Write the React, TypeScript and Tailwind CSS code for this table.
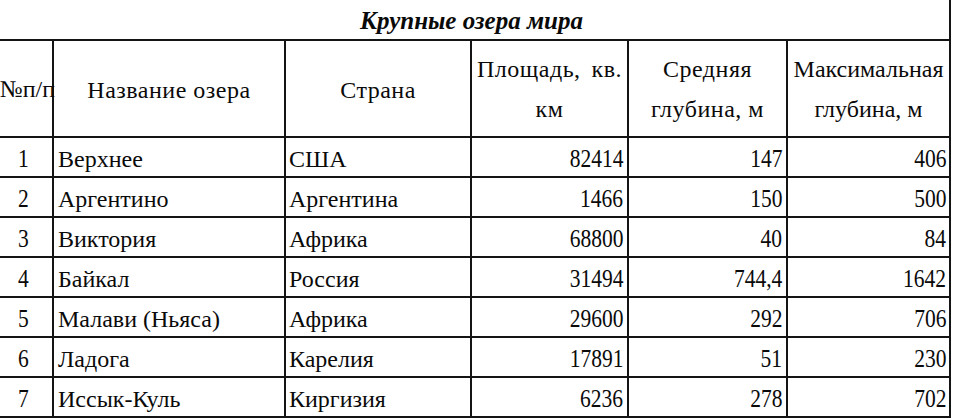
import React from "react";

const rows: [string, string, string, string, string, string][] = [
  ["1", "Верхнее", "США", "82414", "147", "406"],
  ["2", "Аргентино", "Аргентина", "1466", "150", "500"],
  ["3", "Виктория", "Африка", "68800", "40", "84"],
  ["4", "Байкал", "Россия", "31494", "744,4", "1642"],
  ["5", "Малави (Ньяса)", "Африка", "29600", "292", "706"],
  ["6", "Ладога", "Карелия", "17891", "51", "230"],
  ["7", "Иссык-Куль", "Киргизия", "6236", "278", "702"],
];

const grid = "grid grid-cols-[62px_232px_186px_157px_159px_163px]";
const cell = "border-r-2 border-b-2 border-[#141414] overflow-visible";

function Num({ v, center }: { v: string; center?: boolean }) {
  return (
    <span
      className={`inline-block text-[25px] leading-none scale-x-[0.86] ${center ? "origin-center" : "origin-right"}`}
    >
      {v}
    </span>
  );
}

export default function App() {
  return (
    <div
      className="w-[954px] h-[418px] overflow-hidden bg-white text-[#0a0a0a]"
      style={{ fontFamily: '"Liberation Serif", "Times New Roman", serif' }}
    >
      <div className="ml-[-8px] w-[959px]">
        <div className="h-[41px] border-r-2 border-b-2 border-[#141414] flex items-center justify-center pt-[1px]">
          <span className="text-[25px] font-bold italic leading-none pl-[2px]">Крупные озера мира</span>
        </div>
        <div className={`${grid} h-[97px] text-[24px] tracking-[0.5px]`}>
          <div className={`${cell} border-l-2 flex items-center justify-end leading-none`}>
            <span className="whitespace-nowrap mr-[-3px] tracking-normal">№п/п</span>
          </div>
          <div className={`${cell} flex items-center justify-center leading-none pt-[3px]`}>
            Название озера
          </div>
          <div className={`${cell} flex items-center justify-center leading-none pt-[3px]`}>
            Страна
          </div>
          <div className={`${cell} flex items-center px-[5px] leading-[40px]`}>
            <div className="w-full text-justify [text-align-last:center] pt-[1px]">Площадь, кв. км</div>
          </div>
          <div className={`${cell} flex items-center justify-center text-center leading-[40px] px-[2px]`}>
            <div className="pt-[1px]">Средняя<br />глубина, м</div>
          </div>
          <div className={`${cell} flex items-center justify-center text-center leading-[40px] px-[0px] tracking-normal`}>
            <div className="pt-[1px]">Максимальная<br />глубина, м</div>
          </div>
        </div>
        {rows.map((r) => (
          <div key={r[0]} className={`${grid} h-[40px] text-[24px] leading-none`}>
            <div className={`${cell} border-l-2 flex items-center justify-center pt-[3px]`}>
              <Num v={r[0]} center />
            </div>
            <div className={`${cell} flex items-center pl-[4px] pt-[3px] whitespace-nowrap`}>{r[1]}</div>
            <div className={`${cell} flex items-center pl-[3px] pt-[3px] whitespace-nowrap`}>{r[2]}</div>
            <div className={`${cell} flex items-center justify-end pr-[4px] pt-[3px]`}>
              <Num v={r[3]} />
            </div>
            <div className={`${cell} flex items-center justify-end pr-[4px] pt-[3px]`}>
              <Num v={r[4]} />
            </div>
            <div className={`${cell} flex items-center justify-end pr-[3px] pt-[3px]`}>
              <Num v={r[5]} />
            </div>
          </div>
        ))}
      </div>
    </div>
  );
}
